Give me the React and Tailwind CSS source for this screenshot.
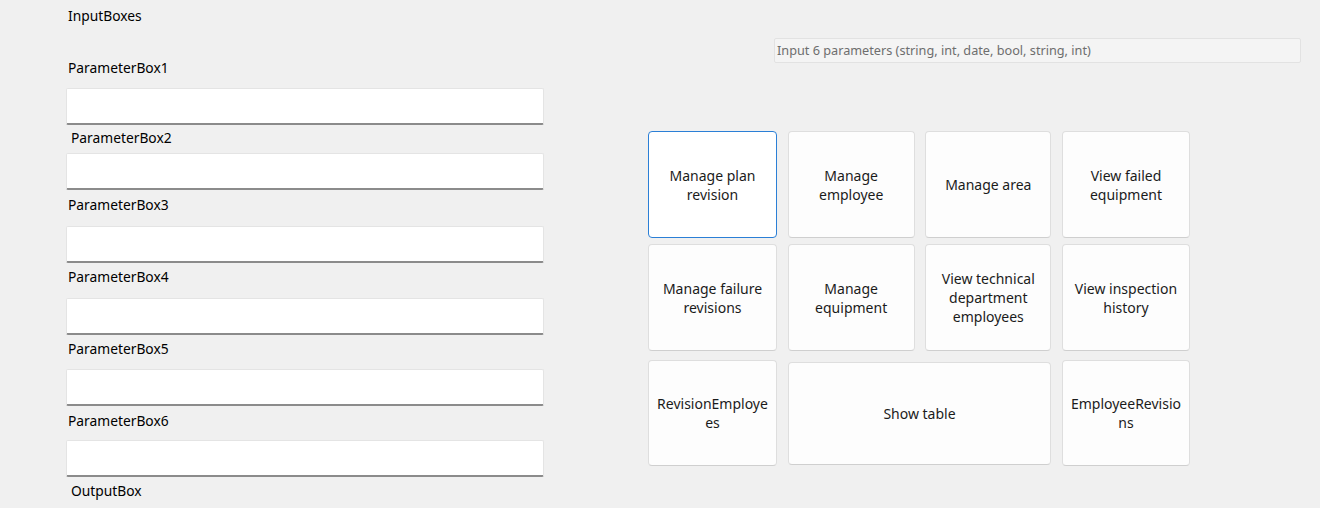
import React from 'react'

const params = [
  { label: 'ParameterBox1', labelMt: 'mt-[32px]', boxMt: 'mt-[10px]', indent: 'pl-[2px]' },
  { label: 'ParameterBox2', labelMt: 'mt-[3px]', boxMt: 'mt-[5px]', indent: 'pl-[5px]' },
  { label: 'ParameterBox3', labelMt: 'mt-[5px]', boxMt: 'mt-[11px]', indent: 'pl-[2px]' },
  { label: 'ParameterBox4', labelMt: 'mt-[4px]', boxMt: 'mt-[11px]', indent: 'pl-[2px]' },
  { label: 'ParameterBox5', labelMt: 'mt-[4px]', boxMt: 'mt-[10px]', indent: 'pl-[2px]' },
  { label: 'ParameterBox6', labelMt: 'mt-[5px]', boxMt: 'mt-[9px]', indent: 'pl-[2px]' },
]

const buttons = [
  { lines: ['Manage plan', 'revision'], focused: true },
  { lines: ['Manage', 'employee'] },
  { lines: ['Manage area'] },
  { lines: ['View failed', 'equipment'] },
  { lines: ['Manage failure', 'revisions'] },
  { lines: ['Manage', 'equipment'] },
  { lines: ['View technical', 'department', 'employees'] },
  { lines: ['View inspection', 'history'] },
  { lines: ['RevisionEmploye', 'es'], last: true },
  { lines: ['Show table'], wide: true },
  { lines: ['EmployeeRevisio', 'ns'], last: true },
]

const Tile = ({ lines, focused, wide, last }) => (
  <button
    className={
      'flex flex-col items-center justify-center rounded-[4px] text-[14px] leading-[19px] text-[#1b1b1b] ' +
      (focused
        ? 'bg-white border border-[#2b7fd6]'
        : 'bg-[#fdfdfd] border border-[#dedede] border-b-[#cfcfcf]') +
      (wide ? ' col-span-2 self-start mt-[5px] h-[103px]' : '') +
      (last ? ' self-start mt-[3px] h-[106px]' : '')
    }
  >
    {lines.map((l, i) => (
      <span key={i} className="whitespace-nowrap">{l}</span>
    ))}
  </button>
)

const App = () => {
  return (
    <div
      className="w-[1320px] h-[508px] bg-[#f0f0f0] flex overflow-hidden"
      style={{ fontFamily: '"Noto Sans", "Open Sans", sans-serif' }}
    >
      {/* left column: parameter inputs */}
      <div className="ml-[66px] w-[478px] flex flex-col pt-[6px] text-[13.8px] leading-[20px] text-black">
        <div className="pl-[2px]">InputBoxes</div>
        {params.map((p) => (
          <React.Fragment key={p.label}>
            <div className={p.labelMt + ' ' + p.indent}>{p.label}</div>
            <input
              className={
                p.boxMt +
                ' h-[37px] w-full bg-white border border-[#e4e4e4] border-b-2 border-b-[#8b8b8b] rounded-[2px] px-2 outline-none'
              }
            />
          </React.Fragment>
        ))}
        <div className="mt-[4px] pl-[5px]">OutputBox</div>
      </div>

      {/* right column: hint + buttons */}
      <div className="ml-[104px] flex flex-col">
        <div className="ml-[126px] mt-[38px] w-[527px] h-[25px] bg-[#f4f4f4] border border-[#e2e2e2] rounded-[2px] px-[2px] flex items-center text-[12.7px] text-[#6e6e6e]">
          Input 6 parameters (string, int, date, bool, string, int)
        </div>
        <div className="mt-[68px] grid grid-cols-[129px_127px_126px_128px] grid-rows-[107px_107px_106px] gap-x-[10.67px] gap-y-[6px]">
          {buttons.map((b, i) => (
            <Tile key={i} {...b} />
          ))}
        </div>
      </div>
    </div>
  )
}

export default App
